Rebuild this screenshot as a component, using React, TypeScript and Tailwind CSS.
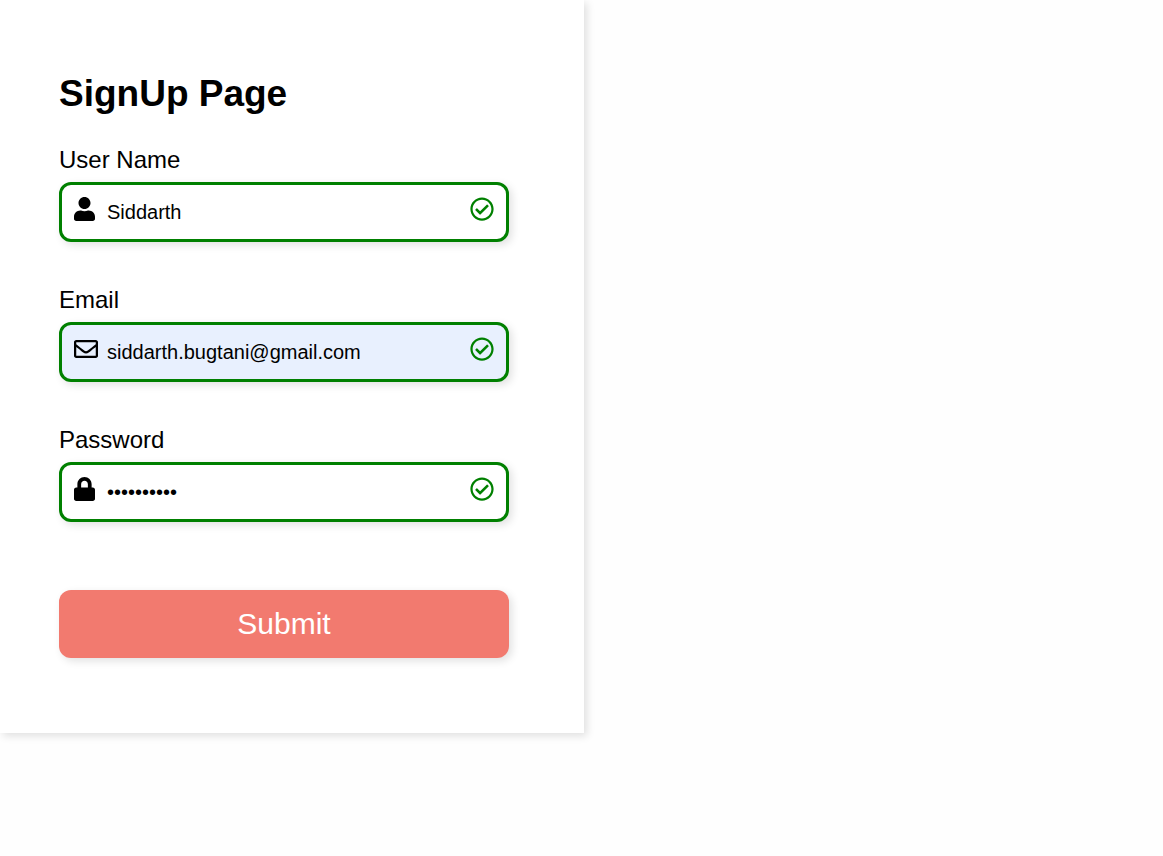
import { useState, type ReactNode } from "react";
import { FaLock, FaRegCheckCircle, FaRegEnvelope, FaUser } from "react-icons/fa";

type FieldProps = {
  id: string;
  label: string;
  type: string;
  initial: string;
  icon: ReactNode;
  filled?: boolean;
};

function Field({ id, label, type, initial, icon, filled = false }: FieldProps) {
  const [value, setValue] = useState(initial);
  return (
    <div className="flex flex-col gap-2">
      <label htmlFor={id} className="text-[24px] leading-[28px]">
        {label}
      </label>
      <div
        className={`flex h-[60px] items-start gap-[9px] rounded-xl border-[3px] border-[#008000] px-3 shadow-[3px_3px_8px_rgba(0,0,0,0.12)] ${
          filled ? "bg-[#e8f0fe]" : "bg-white"
        }`}
      >
        <span className="flex w-6 shrink-0 pt-3">{icon}</span>
        <input
          id={id}
          type={type}
          value={value}
          onChange={(e) => setValue(e.target.value)}
          className="h-full min-w-0 flex-1 bg-transparent text-[20px] text-black outline-none"
        />
        <span className="flex shrink-0 pt-3">
          <FaRegCheckCircle className="h-6 w-6 text-[#008000]" />
        </span>
      </div>
    </div>
  );
}

export default function App() {
  return (
    <main className="min-h-screen bg-[#fefefe] font-['Liberation_Sans',Arial,sans-serif] text-black">
      <form
        onSubmit={(e) => e.preventDefault()}
        className="w-full max-w-[584px] bg-white pt-[72px] pr-[75px] pb-[75px] pl-[59px] shadow-[3px_3px_8px_rgba(0,0,0,0.12)]"
      >
        <h1 className="text-[37px] leading-[44px] font-bold">SignUp Page</h1>
        <div className="mt-[30px] flex flex-col gap-11">
          <Field
            id="username"
            label="User Name"
            type="text"
            initial="Siddarth"
            icon={<FaUser className="h-6 w-[21px]" />}
          />
          <Field
            id="email"
            label="Email"
            type="email"
            initial="siddarth.bugtani@gmail.com"
            icon={<FaRegEnvelope className="h-6 w-6" />}
            filled
          />
          <Field
            id="password"
            label="Password"
            type="password"
            initial="abcdefghij"
            icon={<FaLock className="h-6 w-[21px]" />}
          />
        </div>
        <button
          type="submit"
          className="mt-[68px] block h-[68px] w-full rounded-xl bg-[#f27a6f] pb-0.5 text-[30px] text-white shadow-[3px_3px_8px_rgba(0,0,0,0.12)]"
        >
          Submit
        </button>
      </form>
    </main>
  );
}
